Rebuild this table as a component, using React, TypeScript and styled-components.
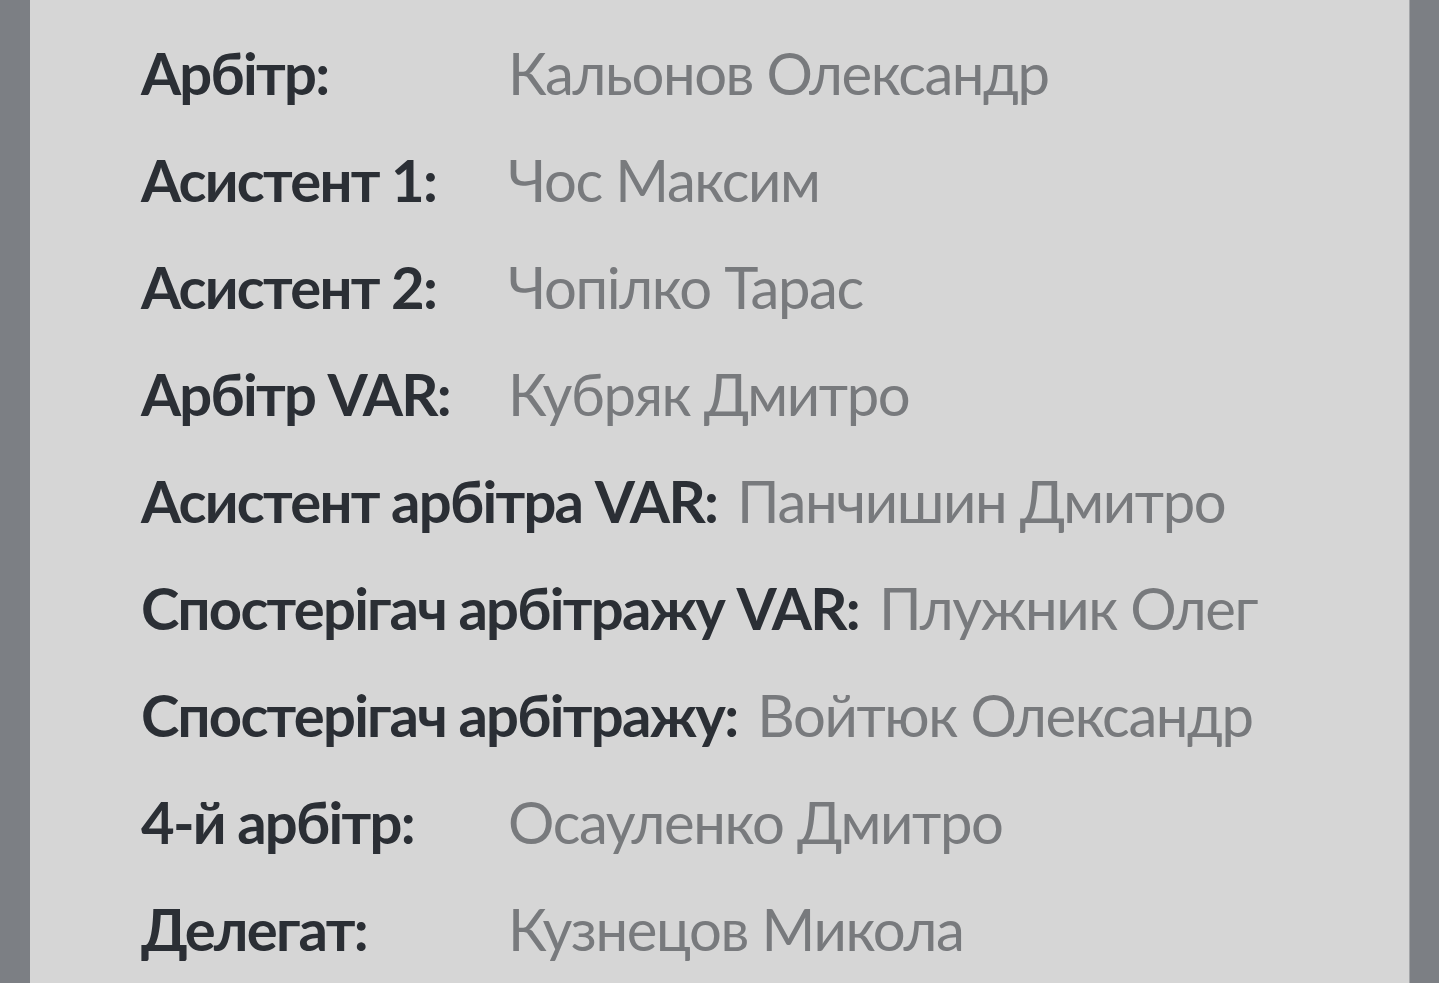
import React from "react";
import styled, { createGlobalStyle } from "styled-components";

const GlobalStyle = createGlobalStyle`
  html, body {
    margin: 0;
    padding: 0;
    background: #7c7f84;
  }
  body {
    font-family: Lato, "Noto Sans", sans-serif;
  }
`;

const Page = styled.div`
  min-height: 983px;
  padding-left: 30px;
  padding-right: 29px;
  box-sizing: border-box;
  background: #7c7f84;
  display: flex;
`;

const Panel = styled.section`
  flex: 1;
  background: #d6d6d6;
  border-right: 1px solid #a3a5a8;
  padding: 19px 0 0 111px;
  box-sizing: border-box;
  display: flex;
  flex-direction: column;
`;

const Row = styled.div`
  display: flex;
  align-items: baseline;
  height: 107px;
  line-height: 107px;
  font-size: 58px;
  white-space: nowrap;
`;

const Label = styled.span`
  min-width: 367px;
  padding-right: 20px;
  box-sizing: border-box;
  font-weight: 700;
  letter-spacing: -1.75px;
  color: #2b2f35;
`;

const Value = styled.span`
  font-weight: 400;
  letter-spacing: -1.4px;
  color: #787a7d;
`;

const officials: [string, string][] = [
  ["Арбітр:", "Кальонов Олександр"],
  ["Асистент 1:", "Чос Максим"],
  ["Асистент 2:", "Чопілко Тарас"],
  ["Арбітр VAR:", "Кубряк Дмитро"],
  ["Асистент арбітра VAR:", "Панчишин Дмитро"],
  ["Спостерігач арбітражу VAR:", "Плужник Олег"],
  ["Спостерігач арбітражу:", "Войтюк Олександр"],
  ["4-й арбітр:", "Осауленко Дмитро"],
  ["Делегат:", "Кузнецов Микола"],
];

export default function App() {
  return (
    <>
      <GlobalStyle />
      <Page>
        <Panel>
          {officials.map(([role, name]) => (
            <Row key={role}>
              <Label>{role}</Label>
              <Value>{name}</Value>
            </Row>
          ))}
        </Panel>
      </Page>
    </>
  );
}
